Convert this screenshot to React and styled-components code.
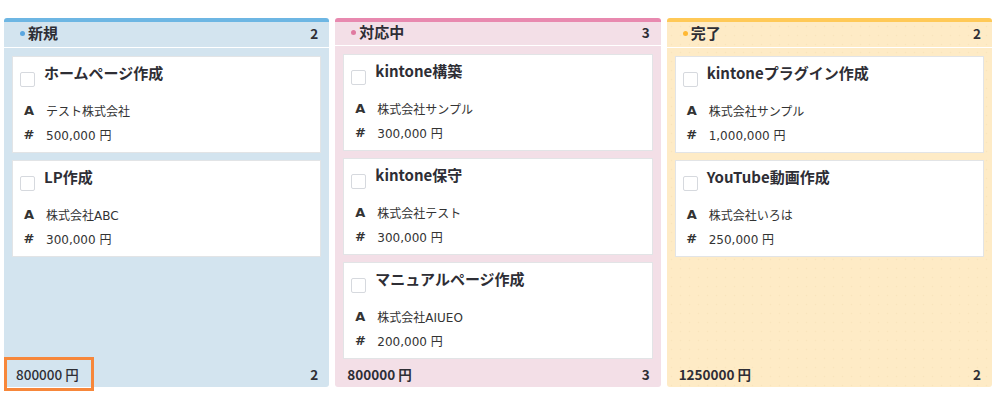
import React from "react";
import styled, { createGlobalStyle, css } from "styled-components";

const Global = createGlobalStyle`
  html, body { margin: 0; padding: 0; background: #fff; }
  body { font-family: "Noto Sans CJK JP", "Noto Sans", sans-serif; color: #333; }
  * { box-sizing: border-box; }
`;

const themes = {
  blue: { bg: "#d3e4ef", top: "#6db6e3", dot: "#5aa6df", dots: false },
  pink: { bg: "#f3dfe7", top: "#e889af", dot: "#e07aa0", dots: false },
  yellow: { bg: "#feebc6", top: "#ffc957", dot: "#ffb833", dots: true },
};

const Board = styled.div`
  display: flex;
  gap: 6px;
  padding: 18px 5px 0 4px;
  width: 997px;
  height: 407px;
`;

const Column = styled.section`
  flex: 1;
  min-width: 0;
  height: 369px;
  display: flex;
  flex-direction: column;
  gap: 1px;
`;

const bgFor = (t) => css`
  background-color: ${t.bg};
  ${t.dots &&
  css`
    background-image: radial-gradient(circle, rgba(215, 185, 130, 0.12) 0.7px, transparent 1.1px);
    background-size: 9px 9px;
  `}
`;

const Header = styled.header`
  ${({ $t }) => bgFor($t)}
  border-top: 4px solid ${({ $t }) => $t.top};
  border-radius: 3px 3px 0 0;
  height: 29px;
  display: flex;
  align-items: center;
  padding: 0 11px 3px 16px;
`;

const Dot = styled.span`
  width: 5px;
  height: 5px;
  border-radius: 50%;
  background: ${({ $c }) => $c};
  margin-right: 3px;
  flex: none;
`;

const HeaderTitle = styled.h2`
  margin: 0;
  font-size: 15px;
  font-weight: 700;
  color: #2e2e35;
  line-height: 20px;
  flex: 1;
`;

const Count = styled.span`
  font-size: 13.5px;
  font-weight: 700;
  color: #2e2e35;
`;

const Body = styled.div`
  ${({ $t }) => bgFor($t)}
  flex: 1;
  display: flex;
  flex-direction: column;
  border-radius: 0 0 3px 3px;
`;

const CardList = styled.div`
  flex: 1;
  display: flex;
  flex-direction: column;
  gap: 7px;
  padding: 8px 8px 2px;
`;

const Card = styled.article`
  background: #fff;
  border: 1px solid #e2e4e6;
  height: 97px;
  padding: 5px 8px 0 7px;
`;

const TitleRow = styled.div`
  display: flex;
  align-items: flex-start;
`;

const Checkbox = styled.span`
  width: 15px;
  height: 15px;
  border: 1px solid #d6d9de;
  border-radius: 2px;
  background: #fff;
  margin-top: 10px;
  flex: none;
`;

const Title = styled.h3`
  margin: 0 0 0 9px;
  font-size: 15px;
  font-weight: 700;
  line-height: 22px;
  color: #2e2e35;
`;

const Fields = styled.div`
  margin-top: 11px;
  display: flex;
  flex-direction: column;
`;

const Field = styled.div`
  display: flex;
  align-items: center;
  height: 24px;
  font-family: "DejaVu Sans", "Noto Sans CJK JP", sans-serif;
  font-size: 12px;
  color: #333;
`;

const FieldIcon = styled.span`
  width: 16px;
  margin-left: 1px;
  margin-right: 9px;
  text-align: center;
  font-size: 13px;
  font-weight: 700;
  color: #333;
`;

const Footer = styled.footer`
  height: 26px;
  display: flex;
  align-items: center;
  justify-content: space-between;
  padding: 0 11px 0 3px;
`;

const Total = styled.span`
  font-size: 13.5px;
  font-weight: 700;
  color: #2e2e35;
  padding: 3px 9px;
  line-height: 20px;
  ${({ $hl }) =>
    $hl &&
    css`
      font-weight: 500;
      outline: 3px solid #f7873a;
      padding: 4px 12px 4px 9px;
    `}
`;

const columns = [
  {
    key: "blue",
    title: "新規",
    total: "800000 円",
    highlight: true,
    cards: [
      { title: "ホームページ作成", company: "テスト株式会社", amount: "500,000 円" },
      { title: "LP作成", company: "株式会社ABC", amount: "300,000 円" },
    ],
  },
  {
    key: "pink",
    title: "対応中",
    total: "800000 円",
    cards: [
      { title: "kintone構築", company: "株式会社サンプル", amount: "300,000 円" },
      { title: "kintone保守", company: "株式会社テスト", amount: "300,000 円" },
      { title: "マニュアルページ作成", company: "株式会社AIUEO", amount: "200,000 円" },
    ],
  },
  {
    key: "yellow",
    title: "完了",
    total: "1250000 円",
    cards: [
      { title: "kintoneプラグイン作成", company: "株式会社サンプル", amount: "1,000,000 円" },
      { title: "YouTube動画作成", company: "株式会社いろは", amount: "250,000 円" },
    ],
  },
];

export default function App() {
  return (
    <>
      <Global />
      <Board>
        {columns.map((col) => {
          const t = themes[col.key];
          return (
            <Column key={col.key}>
              <Header $t={t}>
                <Dot $c={t.dot} />
                <HeaderTitle>{col.title}</HeaderTitle>
                <Count>{col.cards.length}</Count>
              </Header>
              <Body $t={t}>
                <CardList>
                  {col.cards.map((c) => (
                    <Card key={c.title}>
                      <TitleRow>
                        <Checkbox />
                        <Title>{c.title}</Title>
                      </TitleRow>
                      <Fields>
                        <Field>
                          <FieldIcon>A</FieldIcon>
                          {c.company}
                        </Field>
                        <Field>
                          <FieldIcon>#</FieldIcon>
                          {c.amount}
                        </Field>
                      </Fields>
                    </Card>
                  ))}
                </CardList>
                <Footer>
                  <Total $hl={col.highlight}>{col.total}</Total>
                  <Count>{col.cards.length}</Count>
                </Footer>
              </Body>
            </Column>
          );
        })}
      </Board>
    </>
  );
}
